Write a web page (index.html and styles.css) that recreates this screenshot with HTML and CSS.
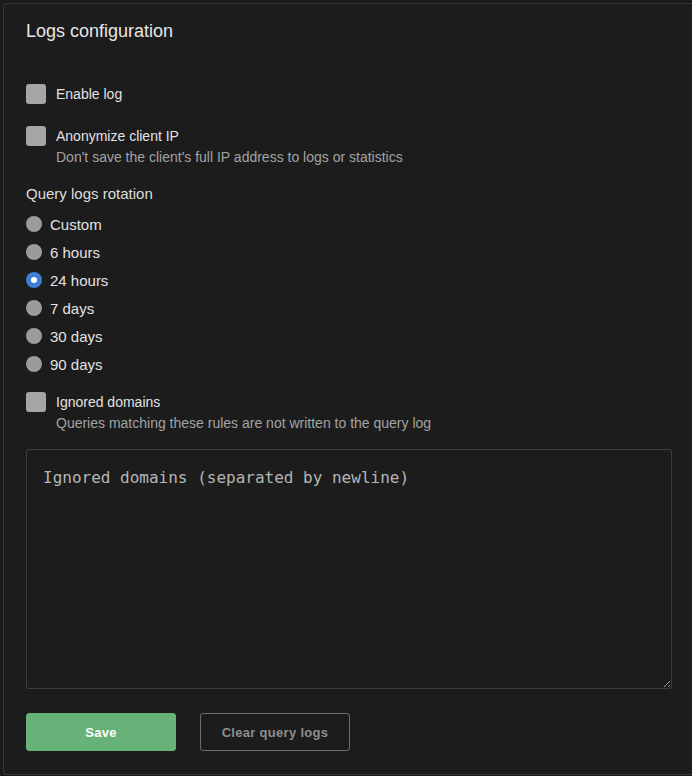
FILE: index.html
```html
<!DOCTYPE html>
<html lang="en">
<head>
    <meta charset="UTF-8">
    <meta name="viewport" content="width=device-width, initial-scale=1.0">
    <title>Logs configuration</title>
    <link rel="stylesheet" href="styles.css">
</head>
<body>

    <div class="card">
        <h2 class="card-title">Logs configuration</h2>

        <label class="check check-first">
            <span class="box"></span>
            <span class="check-text">
                <span class="check-label">Enable log</span>
            </span>
        </label>

        <label class="check check-second">
            <span class="box"></span>
            <span class="check-text">
                <span class="check-label">Anonymize client IP</span>
                <span class="check-desc">Don't save the client's full IP address to logs or statistics</span>
            </span>
        </label>

        <div class="group-title">Query logs rotation</div>

        <div class="radios">
            <label class="radio"><span class="dot"></span>Custom</label>
            <label class="radio"><span class="dot"></span>6 hours</label>
            <label class="radio"><span class="dot checked"></span>24 hours</label>
            <label class="radio"><span class="dot"></span>7 days</label>
            <label class="radio"><span class="dot"></span>30 days</label>
            <label class="radio"><span class="dot"></span>90 days</label>
        </div>

        <label class="check check-ignored">
            <span class="box"></span>
            <span class="check-text">
                <span class="check-label">Ignored domains</span>
                <span class="check-desc">Queries matching these rules are not written to the query log</span>
            </span>
        </label>

        <textarea class="domains" placeholder="Ignored domains (separated by newline)"></textarea>

        <div class="actions">
            <button class="btn btn-save">Save</button>
            <button class="btn btn-clear">Clear query logs</button>
        </div>
    </div>

</body>
</html>
```

FILE: styles.css
```css
* {
    box-sizing: border-box;
    margin: 0;
    padding: 0;
}
html, body {
    background-color: #1a1a1a;
    overflow: hidden;
}
body {
    font-family: "Liberation Sans", Arial, sans-serif;
    color: #dcdcdc;
    padding: 3px 0 0 3px;
    height: 776px;
}
.card {
    width: 692px;
    height: 772px;
    background-color: #1c1c1c;
    border: 1px solid #383838;
    border-radius: 3px;
    padding: 16px 22px 22px;
}
.card-title {
    font-size: 18px;
    font-weight: normal;
    line-height: 22px;
    color: #e6e6e6;
    margin-bottom: 42px;
}
.check {
    display: flex;
    align-items: flex-start;
}
.box {
    width: 20px;
    height: 20px;
    background-color: #a5a5a5;
    border-radius: 3px;
    flex-shrink: 0;
    margin-right: 10px;
}
.check-text {
    display: flex;
    flex-direction: column;
}
.check-label {
    font-size: 14px;
    line-height: 20px;
    color: #e2e2e2;
}
.check-desc {
    font-size: 14px;
    line-height: 22px;
    color: #a3a3a3;
}
.check-first {
    margin-bottom: 22px;
}
.check-second {
    margin-bottom: 16px;
}
.group-title {
    font-size: 15px;
    line-height: 20px;
    color: #dedede;
    margin-bottom: 6px;
}
.radios {
    margin-bottom: 14px;
}
.radio {
    display: flex;
    align-items: center;
    height: 28px;
    font-size: 15px;
    color: #e2e2e2;
}
.dot {
    width: 16px;
    height: 16px;
    border-radius: 50%;
    background-color: #9b9b9b;
    margin-right: 8px;
    position: relative;
}
.dot.checked {
    background-color: #3f7ed6;
}
.dot.checked::after {
    content: "";
    position: absolute;
    left: 5px;
    top: 5px;
    width: 6px;
    height: 6px;
    border-radius: 50%;
    background-color: #ffffff;
}
.check-ignored {
    margin-bottom: 15px;
}
.domains {
    display: block;
    width: 646px;
    height: 240px;
    background-color: #1c1c1c;
    border: 1px solid #3c3c3c;
    border-radius: 2px;
    padding: 17px 16px;
    font-family: "DejaVu Sans Mono", "Liberation Mono", monospace;
    font-size: 16px;
    line-height: 22px;
    color: #dcdcdc;
    resize: vertical;
    outline: none;
}
.domains::placeholder {
    color: #b5b5b5;
}
.actions {
    display: flex;
    gap: 24px;
    margin-top: 24px;
}
.btn {
    width: 150px;
    height: 38px;
    border-radius: 3px;
    font-family: "Liberation Sans", Arial, sans-serif;
    font-size: 13px;
    font-weight: bold;
    letter-spacing: 0.3px;
    cursor: pointer;
}
.btn-save {
    background-color: #67b279;
    border: 1px solid #67b279;
    color: #ffffff;
}
.btn-clear {
    background-color: transparent;
    border: 1px solid #6c6c6c;
    color: #8e8e8e;
}
```
